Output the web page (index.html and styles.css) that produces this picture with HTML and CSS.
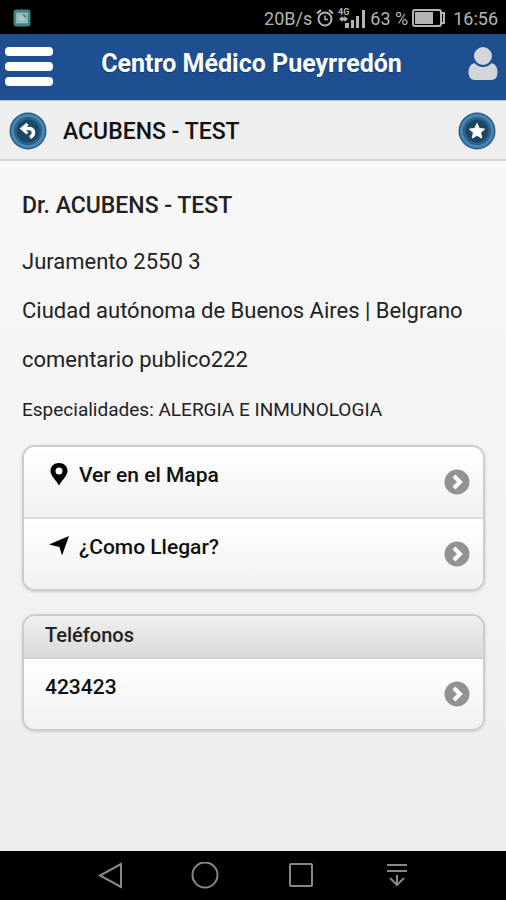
FILE: index.html
```html
<!DOCTYPE html>
<html lang="es">
<head>
  <meta charset="UTF-8">
  <meta name="viewport" content="width=device-width, initial-scale=1.0">
  <title>Centro Médico Pueyrredón</title>
  <link rel="stylesheet" href="styles.css">
</head>
<body>
<div class="statusbar">
  <svg class="notif" width="18" height="18" viewBox="0 0 18 18">
    <rect x="0.5" y="0.5" width="17" height="17" rx="3" fill="#3f8587"/>
    <rect x="4" y="4.500" width="10" height="9" fill="none" stroke="#a9c4c4" stroke-width="1.500"/>
    <path d="M5 5.500h4l4 4V7l-2-1.500h2V12.500H5z" fill="#a9c4c4"/>
  </svg>
  <span>20B/s</span>
  <svg width="18" height="20" viewBox="0 0 18 20" fill="none" stroke="#b4b4b4" stroke-width="2">
    <circle cx="9" cy="11" r="6.500"/>
    <path d="M1 5.500L5 2M17 5.500L13 2" stroke-width="2.200"/>
    <path d="M9 7.500V11.500H12" stroke-width="1.500"/>
  </svg>
  <svg width="28" height="24" viewBox="0 0 28 24" fill="#b4b4b4">
    <text class="net" x="0" y="9">4G</text>
    <path d="M1 13l3.500-3v1.500h2V10L10 13l-3.500 3v-1.500h-2V16z"/>
    <rect x="7" y="17" width="4" height="5"/>
    <rect x="13" y="14" width="3" height="8"/>
    <rect x="18" y="10" width="3" height="12"/>
    <rect x="24" y="4" width="3" height="18"/>
  </svg>
  <span>63 %</span>
  <svg class="battery" width="33" height="18" viewBox="0 0 33 18">
    <rect x="1" y="1" width="28" height="16" rx="2" fill="none" stroke="#b4b4b4" stroke-width="2"/>
    <rect x="3" y="3" width="18" height="12" fill="#b4b4b4"/>
    <path d="M29 4h3v10h-3" fill="none" stroke="#b4b4b4" stroke-width="2"/>
  </svg>
  <span>16:56</span>
</div>

<header class="header">
  <button class="icon-btn" type="button" aria-label="Menú">
    <svg width="48" height="40" viewBox="0 0 48 40" fill="#fff">
      <rect width="48" height="9" rx="4"/>
      <rect y="15" width="48" height="9" rx="4"/>
      <rect y="30" width="48" height="9" rx="4"/>
    </svg>
  </button>
  <h1>Centro Médico Pueyrredón</h1>
  <button class="icon-btn user" type="button" aria-label="Usuario">
    <svg width="30" height="36" viewBox="0 0 30 36" fill="#d3d5d8">
      <path d="M8 16C3 16 0.500 20 0.500 25c0 5 2 8 6.500 8h16c4.500 0 6.500-3 6.500-8 0-5-2.500-9-7.500-9z"/>
      <circle cx="15" cy="9" r="10" stroke="#1d4f91" stroke-width="2"/>
    </svg>
  </button>
</header>

<div class="subheader">
  <button class="icon-btn" type="button" aria-label="Volver">
    <svg width="38" height="38" viewBox="0 0 38 38">
      <circle cx="19" cy="19" r="18.500" fill="#2a5c82"/>
      <circle cx="19" cy="19" r="15.500" fill="none" stroke="#4387b8" stroke-width="3"/>
      <circle cx="19" cy="19" r="12.500" fill="#1f4764" stroke="#2c648c" stroke-width="2"/>
      <path d="M18.500 12L13 16.500l5.500 5" fill="none" stroke="#fff" stroke-width="3"/>
      <path d="M14 16.500h6c5 0 6.500 6 1 9" fill="none" stroke="#fff" stroke-width="3.500"/>
    </svg>
  </button>
  <h2>ACUBENS - TEST</h2>
  <button class="icon-btn" type="button" aria-label="Favorito">
    <svg width="38" height="38" viewBox="0 0 38 38">
      <circle cx="19" cy="19" r="18.500" fill="#2a5c82"/>
      <circle cx="19" cy="19" r="15.500" fill="none" stroke="#4387b8" stroke-width="3"/>
      <circle cx="19" cy="19" r="12.500" fill="#1f4764" stroke="#2c648c" stroke-width="2"/>
      <path d="M19 11.500l2.300 5 5.200.6-3.900 3.600 1.100 5.300-4.700-2.700-4.700 2.700 1.100-5.300-3.900-3.600 5.200-.6z" fill="#fff" stroke="#fff"/>
    </svg>
  </button>
</div>

<main class="content">
  <h3>Dr. ACUBENS - TEST</h3>
  <p>Juramento 2550 3</p>
  <p>Ciudad autónoma de Buenos Aires | Belgrano</p>
  <p>comentario publico222</p>
  <p class="small">Especialidades: ALERGIA E INMUNOLOGIA</p>

  <ul class="list">
    <li>
      <a class="row" href="#mapa">
        <svg class="lead" width="20" height="26" viewBox="0 0 20 26">
          <path fill-rule="evenodd" d="M10 2C5 2 1.500 5.500 1.500 10c0 4.500 5 8.500 8.500 14.500C13.500 18.500 18.500 14.500 18.500 10c0-4.500-3.500-8-8.500-8zm0 4.500a3.500 3.500 0 1 1 0 7 3.500 3.500 0 0 1 0-7z" fill="#000"/>
        </svg>
        <span>Ver en el Mapa</span>
        <svg class="arrow" width="26" height="26" viewBox="0 0 26 26">
          <circle cx="13" cy="13" r="12.500" fill="#929292"/>
          <path d="M10 7l6 6-6 6" fill="none" stroke="#fff" stroke-width="4"/>
        </svg>
      </a>
    </li>
    <li>
      <a class="row" href="#llegar">
        <svg class="lead" width="20" height="26" viewBox="0 0 20 26">
          <path d="M20 3L13 22.500l-2.500-8.500L0 11.500z" fill="#000"/>
        </svg>
        <span>¿Como Llegar?</span>
        <svg class="arrow" width="26" height="26" viewBox="0 0 26 26">
          <circle cx="13" cy="13" r="12.500" fill="#929292"/>
          <path d="M10 7l6 6-6 6" fill="none" stroke="#fff" stroke-width="4"/>
        </svg>
      </a>
    </li>
  </ul>

  <section class="list phones">
    <h4>Teléfonos</h4>
    <a class="row" href="tel:423423">
      <span>423423</span>
      <svg class="arrow" width="26" height="26" viewBox="0 0 26 26">
        <circle cx="13" cy="13" r="12.500" fill="#929292"/>
        <path d="M10 7l6 6-6 6" fill="none" stroke="#fff" stroke-width="4"/>
      </svg>
    </a>
  </section>
</main>

<nav class="navbar">
  <button class="icon-btn" type="button" aria-label="Atrás">
    <svg width="28" height="28" viewBox="0 0 28 28"><path d="M26 2v23L5 13.500z"/></svg>
  </button>
  <button class="icon-btn" type="button" aria-label="Inicio">
    <svg width="28" height="28" viewBox="0 0 28 28"><circle cx="14" cy="13" r="12.500"/></svg>
  </button>
  <button class="icon-btn" type="button" aria-label="Recientes">
    <svg width="28" height="28" viewBox="0 0 28 28"><rect x="3" y="2" width="22" height="22" rx="1"/></svg>
  </button>
  <button class="icon-btn" type="button" aria-label="Notificaciones">
    <svg width="28" height="28" viewBox="0 0 28 28"><path d="M4 3h20M4 9h20M14 13v10M7 16l7 7 7-7"/></svg>
  </button>
</nav>
</body>
</html>
```
FILE: styles.css
```css
* { box-sizing: border-box; }
body {
    margin: 0;
    min-height: 100vh;
    display: flex;
    flex-direction: column;
    font-family: Roboto, "Liberation Sans", sans-serif;
    font-size: 22px;
    color: #222;
    background: #eee;
}
h1, h2, h3, h4, p, ul { margin: 0; padding: 0; font-weight: normal; }
svg { display: block; flex-shrink: 0; }
.icon-btn { padding: 0; border: none; background: none; cursor: pointer; }

.statusbar {
    display: flex;
    align-items: center;
    gap: 4px;
    height: 34px;
    padding: 2px 8px 0 13px;
    background: #000;
    color: #b4b4b4;
    font-size: 18px;
}
.notif { margin-right: auto; }
.net { font-size: 9px; font-weight: bold; }
.battery { margin-right: 4px; }

.header {
    display: grid;
    grid-template-columns: 1fr auto 1fr;
    align-items: start;
    justify-items: start;
    height: 66px;
    padding: 13px 8px 0 5px;
    background: #1d4f91;
    color: #fff;
}
.header h1 {
    font-size: 25px;
    font-weight: bold;
    line-height: 34px;
    text-shadow: 0 1px 1px #133a70;
}
.user { justify-self: end; }

.subheader {
    display: flex;
    align-items: center;
    gap: 16px;
    height: 61px;
    padding: 2px 10px 0 9px;
    background: #eee;
    border-top: 1px solid #b9bfc8;
    border-bottom: 2px solid #d4d4d4;
}
.subheader h2 { flex: 1; font-size: 23px; font-weight: 500; color: #111; }

/* detalle del profesional */
.content {
    flex: 1;
    padding: 32px 21px 24px 22px;
    background: linear-gradient(#f8f8f8, #eee);
}
.content h3 { font-size: 23px; font-weight: 500; line-height: 26px; margin-bottom: 30px; }
.content p { line-height: 26px; margin-bottom: 23px; white-space: nowrap; }
.content p.small { font-size: 19px; line-height: 28px; margin-bottom: 21px; }

.list {
    list-style: none;
    overflow: hidden;
    border: 2px solid #ccc;
    border-radius: 13px;
    box-shadow: 0 1px 3px #ccc;
}
.list li + li { border-top: 2px solid #ddd; }
.row {
    display: flex;
    align-items: flex-start;
    height: 70px;
    padding: 14px 13px 0 21px;
    gap: 10px;
    background: linear-gradient(#fff, #f1f1f1);
    color: #111;
    font-size: 21px;
    font-weight: 500;
    line-height: 28px;
    text-decoration: none;
}
.lead { margin-left: 4px; }
.arrow { margin: 8px 0 0 auto; }

.phones { margin-top: 23px; }
.phones h4 {
    height: 43px;
    padding: 0 21px;
    background: linear-gradient(#efefef, #dadada);
    border-bottom: 1px solid #ccc;
    font-size: 20px;
    font-weight: 500;
    line-height: 38px;
}

.navbar {
    display: flex;
    justify-content: space-around;
    align-items: center;
    height: 49px;
    padding: 0 12%;
    background: #000;
}
.navbar svg { fill: none; stroke: #888; stroke-width: 2; }
```
